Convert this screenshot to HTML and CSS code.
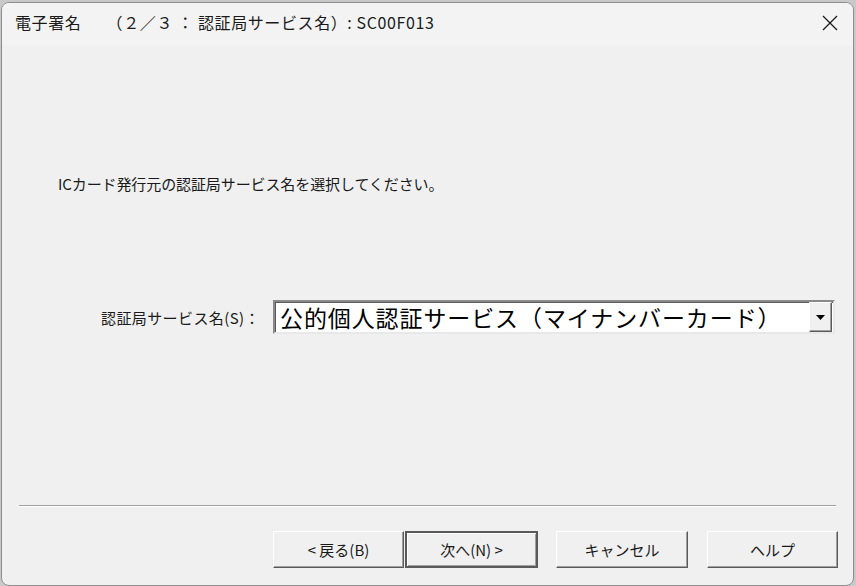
FILE: index.html
```html
<!DOCTYPE html>
<html lang="ja">
<head>
  <meta charset="UTF-8">
  <meta name="viewport" content="width=device-width, initial-scale=1.0">
  <title>電子署名</title>
  <link rel="stylesheet" href="styles.css">
</head>
<body>
  <div class="window">
    <div class="titlebar">
      <span class="title">電子署名　　（２／３ ： 認証局サービス名）: SC00F013</span>
      <button class="btn-close" aria-label="閉じる">
        <svg width="16" height="16" viewBox="0 0 16 16">
          <path d="M1 1 L15 15 M15 1 L1 15" stroke="#1a1a1a" stroke-width="1.3" fill="none"/>
        </svg>
      </button>
    </div>

    <div class="content">
      <p class="instruction">ICカード発行元の認証局サービス名を選択してください。</p>

      <div class="field-row">
        <label class="field-label" for="serviceSelect">認証局サービス名(S)：</label>
        <div class="combo" id="serviceSelect">
          <span class="combo-value">公的個人認証サービス（マイナンバーカード）</span>
          <span class="combo-arrow">
            <svg width="9" height="5" viewBox="0 0 9 5"><path d="M0 0 H9 L4.5 5 Z" fill="#000"/></svg>
          </span>
        </div>
      </div>

      <div class="separator"></div>

      <div class="button-row">
        <button class="btn">&lt; 戻る(B)</button>
        <button class="btn btn-default">次へ(N) &gt;</button>
        <button class="btn btn-cancel">キャンセル</button>
        <button class="btn btn-help">ヘルプ</button>
      </div>
    </div>
  </div>
</body>
</html>
```

FILE: styles.css
```css
html, body {
  margin: 0;
  height: 100%;
}
body {
  background: #c9c9c9;
  font-family: "Noto Sans CJK JP", "Noto Sans", sans-serif;
  color: #1a1a1a;
  overflow: hidden;
}
.window {
  margin: 2px 0 0 1px;
  width: 851px;
  height: 582px;
  border: 1px solid #8e8e8e;
  border-radius: 8px;
  overflow: hidden;
  background: #f0f0f0;
  display: flex;
  flex-direction: column;
}
.titlebar {
  height: 43px;
  flex: none;
  display: flex;
  align-items: flex-start;
  background: #f3f3f3;
  padding-left: 13px;
}
.title {
  margin-top: 8px;
  font-size: 16px;
  line-height: 22px;
  letter-spacing: 0.6px;
  white-space: nowrap;
}
.btn-close {
  margin-left: auto;
  width: 46px;
  height: 40px;
  border: none;
  background: transparent;
  display: flex;
  align-items: center;
  justify-content: center;
  padding: 0;
}
.content {
  flex: 1;
  display: flex;
  flex-direction: column;
}
.instruction {
  margin: 128px 0 0 56px;
  font-size: 15px;
  line-height: 20px;
  letter-spacing: -0.1px;
}
.field-row {
  display: flex;
  align-items: center;
  margin-top: 106px;
  padding-left: 99px;
}
.field-label {
  font-size: 15px;
  width: 172px;
  letter-spacing: 0.4px;
}
.combo {
  width: 558px;
  height: 30px;
  background: #fff;
  border: 2px solid;
  border-color: #8a8a8a #e8e8e8 #e8e8e8 #8a8a8a;
  box-shadow: inset 1px 1px 0 #5a5a5a;
  display: flex;
  align-items: center;
}
.combo-value {
  flex: 1;
  padding-left: 5px;
  font-size: 23px;
  line-height: 30px;
  color: #000;
  white-space: nowrap;
  letter-spacing: 0.9px;
}
.combo-arrow {
  width: 21px;
  height: 28px;
  margin-right: 1px;
  background: #f0f0f0;
  border: 1px solid;
  border-color: #fff #5a5a5a #5a5a5a #fff;
  box-shadow: inset -1px -1px 0 #a0a0a0;
  display: flex;
  align-items: center;
  justify-content: center;
}
.separator {
  margin: 171px 17px 0 17px;
  height: 1px;
  background: #a0a0a0;
  border-bottom: 1px solid #fff;
}
.button-row {
  display: flex;
  justify-content: flex-end;
  margin-top: 24px;
  padding-right: 15px;
}
.btn {
  width: 131px;
  height: 37px;
  font-family: inherit;
  font-size: 15px;
  color: #1a1a1a;
  background: #f0f0f0;
  border: 1px solid;
  border-color: #fff #5a5a5a #5a5a5a #fff;
  box-shadow: inset -1px -1px 0 #a0a0a0;
  padding: 0;
}
.btn-default {
  width: 133px;
  margin-left: 1px;
  border: 2px solid #5a5a5a;
  box-shadow: inset 1px 1px 0 #fff, inset -1px -1px 0 #a0a0a0;
}
.btn-cancel {
  width: 132px;
  margin-left: 18px;
}
.btn-help {
  margin-left: 19px;
}
```
